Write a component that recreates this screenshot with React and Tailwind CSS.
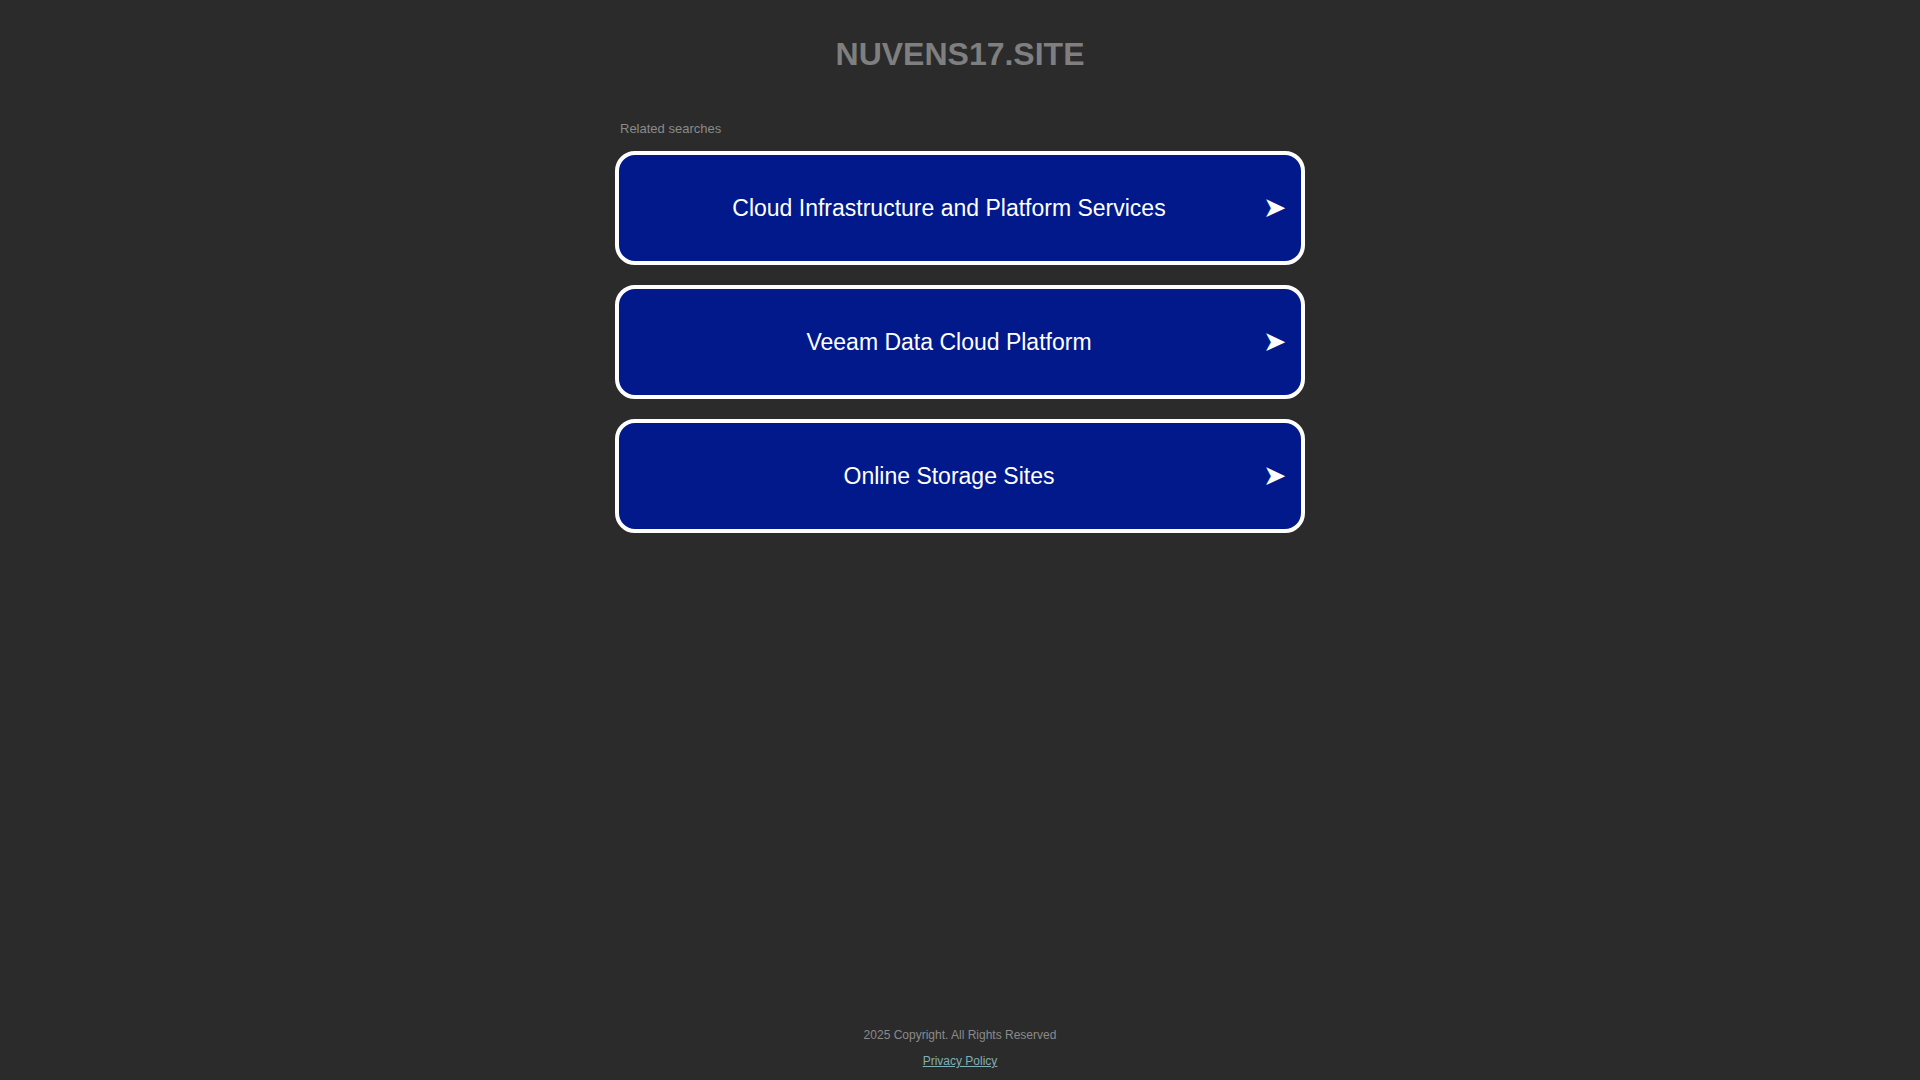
import React from "react";

const searches = [
  "Cloud Infrastructure and Platform Services",
  "Veeam Data Cloud Platform",
  "Online Storage Sites",
];

const SearchLink = ({ label }) => (
  <a
    href="#"
    className="flex items-center h-[114px] rounded-[20px] border-4 border-white bg-[#01198b] text-white pl-[16px] pr-[16px]"
  >
    <span className="flex-1 text-center text-[23px]">{label}</span>
    <span className="w-[22px] text-[28px] leading-none">➤</span>
  </a>
);

export default function App() {
  return (
    <div
      className="min-h-screen flex flex-col bg-[#2b2b2b]"
      style={{ fontFamily: '"Liberation Sans", Arial, sans-serif' }}
    >
      <div className="w-[690px] mx-auto">
        <h1 className="pt-[35px] text-center text-[32px] leading-[38px] font-bold text-[#7f7f7f]">
          NUVENS17.SITE
        </h1>
        <p className="mt-[48px] mb-[14px] pl-[5px] text-[13px] leading-[16px] text-[#8a8a8a]">
          Related searches
        </p>
        <div className="flex flex-col gap-[20px]">
          {searches.map((s) => (
            <SearchLink key={s} label={s} />
          ))}
        </div>
      </div>
      <footer className="mt-auto pb-[11px] text-center text-[12px] leading-[15px] text-[#8a8a8a]">
        <p>2025 Copyright. All Rights Reserved</p>
        <a href="#" className="inline-block mt-[11px] underline text-[#7fb0b5]">
          Privacy Policy
        </a>
      </footer>
    </div>
  );
}
